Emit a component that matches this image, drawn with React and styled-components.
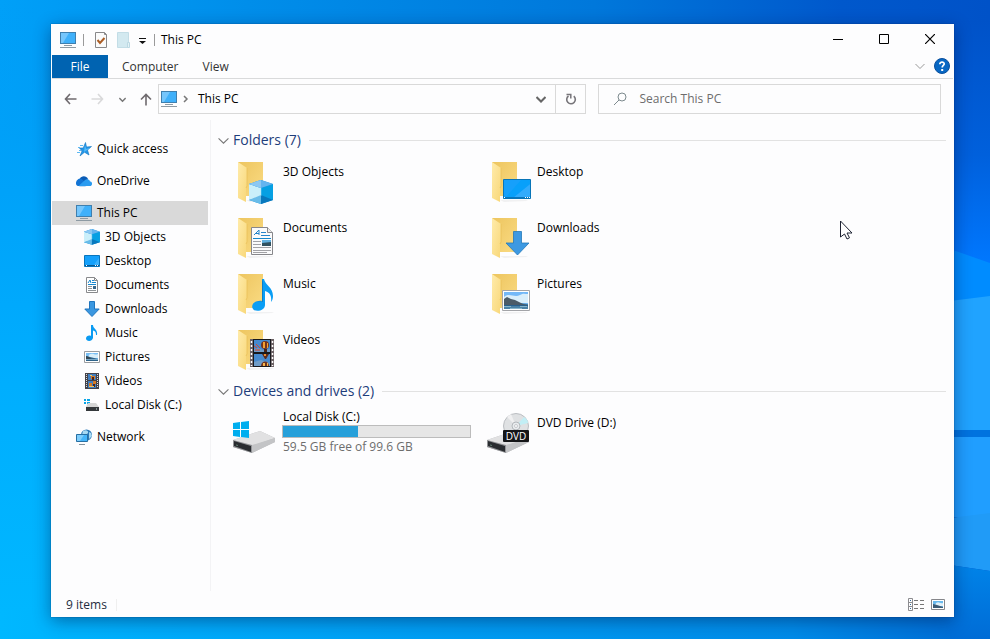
import React from "react";
import styled, { createGlobalStyle, css } from "styled-components";

const GlobalStyle = createGlobalStyle`
  * { box-sizing: border-box; }
  html, body { margin: 0; padding: 0; }
  body {
    font-family: "Open Sans", "Noto Sans", sans-serif;
    font-size: 12px;
    line-height: 16px;
    color: #000;
    background: #0078d7;
  }
  button, input { font: inherit; color: inherit; }
  svg { display: block; flex: none; }
`;

/* ---------- layout ---------- */

const Desktop = styled.main`
  position: relative;
  display: flex;
  min-height: 100vh;
  padding: 24px 36px 22px 51px;
  overflow: hidden;
`;

const WallpaperLayer = styled.div`
  position: absolute;
  inset: 0;
  svg { width: 100%; height: 100%; }
`;

const Window = styled.section`
  position: relative;
  display: flex;
  flex: 1;
  flex-direction: column;
  min-width: 0;
  padding: 0 1px;
  background: #fdfdfe;
  box-shadow: 0 4px 16px rgba(0, 20, 70, 0.45), 0 0 1px rgba(0, 40, 90, 0.7);
`;

const TitleBar = styled.header`
  display: flex;
  align-items: center;
  height: 31px;
  padding-left: 8px;
`;

const PlainButton = styled.button`
  display: flex;
  align-items: center;
  justify-content: center;
  padding: 0;
  border: 0;
  background: transparent;
`;

const QuickTools = styled.div`
  display: flex;
  align-items: center;
  gap: 6px;
`;

const Divider = styled.span`
  width: 1px;
  height: 12px;
  margin: 0 3px 0 1px;
  background: ${(p) => (p.$faint ? "#efefef" : "#9a9a9a")};
`;

const ToolButton = styled(PlainButton)`
  width: ${(p) => (p.$narrow ? "10px" : "16px")};
  height: 20px;
`;

const WindowTitle = styled.h1`
  flex: 1;
  margin: 0 0 0 3px;
  font-size: 12px;
  font-weight: 400;
`;

const CaptionButton = styled(PlainButton)`
  align-self: flex-start;
  width: 46px;
  height: 30px;
`;

const Ribbon = styled.nav`
  display: flex;
  align-items: stretch;
  height: 24px;
  border-bottom: 1px solid #d9dadb;
`;

const RibbonTab = styled.button`
  padding: 0 10px 0 14px;
  border: 0;
  background: transparent;
  color: #333;
  ${(p) =>
    p.$primary &&
    css`
      width: 56px;
      padding: 0;
      background: #0063b1;
      color: #fff;
    `}
`;

const RibbonTools = styled.div`
  display: flex;
  align-items: center;
  height: 22px;
  gap: 9px;
  margin-left: auto;
  padding-right: 3px;
`;

const AddressRow = styled.div`
  display: flex;
  gap: 12px;
  padding: 5px 12px 6px;
`;

const NavButtons = styled.div`
  display: flex;
  align-items: center;
  justify-content: space-between;
  width: 88px;
`;

const NavGroup = styled.div`
  display: flex;
  flex: 8;
  gap: 6px;
`;

const AddressBox = styled.div`
  display: flex;
  flex: 1;
  align-items: center;
  height: 30px;
  padding-left: 2px;
  border: 1px solid #d9d9d9;
`;

const Crumb = styled(PlainButton)`
  flex: 1;
  justify-content: flex-start;
  gap: 6px;
`;

const CrumbLabel = styled.span`
  padding-left: 3px;
`;

const AddressAction = styled(PlainButton)`
  width: 30px;
  height: 28px;
  border-left: 1px solid ${(p) => (p.$bordered ? "#d9d9d9" : "transparent")};
`;

const SearchBox = styled.label`
  display: flex;
  flex: 5;
  align-items: center;
  gap: 12px;
  height: 30px;
  padding-left: 14px;
  border: 1px solid #d9d9d9;
`;

const SearchInput = styled.input`
  flex: 1;
  min-width: 0;
  padding: 0;
  border: 0;
  outline: 0;
  background: transparent;
  &::placeholder { color: #6d6d6d; opacity: 1; }
`;

const Body = styled.div`
  display: flex;
  flex: 1;
`;

const Sidebar = styled.nav`
  display: flex;
  flex-direction: column;
  gap: 8px;
  width: 159px;
  padding: 17px 2px 0 0;
  border-right: 1px solid #f3f3f5;
`;

const TreeGroup = styled.div`
  display: flex;
  flex-direction: column;
`;

const TreeItem = styled.a`
  display: flex;
  align-items: center;
  gap: 5px;
  height: 24px;
  padding-left: ${(p) => (p.$nested ? "32px" : "24px")};
  background: ${(p) => (p.$selected ? "#d9d9d9" : "transparent")};
  color: #000;
  text-decoration: none;
`;

const Content = styled.div`
  flex: 1;
  min-width: 0;
  padding: 8px 7px 0 7px;
`;

const GroupSection = styled.section`
  margin-bottom: 1px;
`;

const GroupTitle = styled.h2`
  display: flex;
  align-items: center;
  gap: 4px;
  height: 24px;
  margin: 0;
  color: #1e3d7b;
  font-size: 14px;
  font-weight: 400;
  line-height: 24px;
  &::after {
    content: "";
    flex: 1;
    height: 1px;
    margin-left: 4px;
    background: #e2e2e2;
  }
`;

const TileGrid = styled.div`
  display: grid;
  grid-template-columns: repeat(auto-fill, 254px);
  grid-auto-rows: 56px;
  max-width: 600px;
  padding: 2px 0 0 10px;
`;

const Tile = styled.a`
  display: flex;
  gap: 2px;
  padding: 4px;
  color: #000;
  text-decoration: none;
`;

const TileText = styled.div`
  display: flex;
  flex-direction: column;
  width: 189px;
  padding-top: ${(p) => (p.$detailed ? "0" : "6px")};
`;

const TileName = styled.span`
  padding-left: 1px;
`;

const TileNote = styled(TileName)`
  color: #6d6d6d;
`;

const Meter = styled.div`
  height: 13px;
  margin-bottom: 1px;
  border: 1px solid #bcbcbc;
  background: #e6e6e6;
`;

const MeterFill = styled.div`
  height: 100%;
  background: #26a0da;
`;

const StatusBar = styled.footer`
  display: flex;
  align-items: center;
  gap: 8px;
  height: 26px;
  padding: 1px 8px 0 14px;
  color: #1f2d40;
`;

const ViewButtons = styled.div`
  display: flex;
  gap: 7px;
  margin-left: auto;
`;

const Pointer = styled.div`
  position: absolute;
  left: 840px;
  top: 220px;
  pointer-events: none;
`;

/* ---------- small icons (16px) ---------- */

const Svg = ({ w = 16, h = w, children }) => (
  <svg width={w} height={h} viewBox={`0 0 ${w} ${h}`} fill="none" aria-hidden="true">
    {children}
  </svg>
);

const MonitorIcon = () => (
  <Svg>
    <path d="M0 0h16v12H0z" fill="#3f7fae" />
    <path d="M1 1h14v10H1z" fill="#3fb0fa" />
    <path d="M1 1h8L3 11H1z" fill="#75c6fc" />
    <path d="M4 13.500h8M0 15.500h16" stroke="#8d9aa3" />
  </Svg>
);

const StarIcon = () => (
  <Svg>
    <path d="M9.500 1.500l1 4.500 5-.5-4 3.500 1.500 5-4.500-2.800L4 15l2-5-2.500-3h3.700z" fill="#2497e8" stroke="#1273bf" strokeWidth=".6" />
    <path d="M4 4.500h3M2 6.500h2M3 9.500h2M1 11.500h3" stroke="#5cb8f2" />
    <path d="M9 4l1 4 4-1-6 4z" fill="#55bbfa" />
  </Svg>
);

const CloudIcon = () => (
  <Svg>
    <path d="M4 5.500C5 2.500 10.500 2 12 6l-3 5H3z" fill="#0a5bb5" />
    <path d="M0 10.500C0 7.500 2 5.500 5 5.500L13 12c-2 2-10 1-11 1-1 0-2-1-2-2.500z" fill="#1273d4" />
    <path d="M8 8c2-3 6-2 6 .500 3 0 2.500 4.500 0 4.500H2.500z" fill="#2a9bf0" />
  </Svg>
);

const CubeShape = () => (
  <g>
    <path d="M0 4l12-4 12 4v16l-12 4-12-4z" fill="#0f8fd8" />
    <path d="M0 4l12 4v9L0 20z" fill="#caeffa" />
    <path d="M12 8l12-4v16l-12-4z" fill="#06a0e3" />
    <path d="M0 4l12-4 12 4-12 4z" fill="#64b4ef" />
    <path d="M0 4l12-4v8z" fill="#8dc8f2" />
    <path d="M0 20l12-5v9z" fill="#69bce9" />
    <path d="M12 15l12 5-12 4z" fill="#0878bd" />
    <path d="M12 8v8" stroke="#a5e1f9" strokeWidth=".5" />
  </g>
);

const CubeIcon = () => (
  <Svg>
    <g transform="scale(.66)">
      <CubeShape />
    </g>
  </Svg>
);

const ScreenIcon = () => (
  <Svg>
    <path d="M.5 2.500h15v11H.5z" fill="#14a0fb" stroke="#0875bd" />
    <path d="M9 13L15 5v8z" fill="#3bb1fc" />
    <path d="M1 12.500h14" stroke="#065790" />
    <path d="M2 12.500h1M11 12.500h1M13 12.500h1" stroke="#fff" />
  </Svg>
);

const PageIcon = () => (
  <Svg>
    <path d="M2.500.5h8l3 3v12h-11z" fill="#fff" stroke="#88898c" />
    <path d="M10.500.5v3h3" stroke="#88898c" />
    <path d="M4 6l2-3 1 3M8 3.500h2M8 5.500h4M4 7.500h8" stroke="#1787cf" />
    <path d="M4 9.500h4M4 11.500h4M4 13.500h8" stroke="#8f9498" />
    <path d="M9 9h3v3H9z" fill="#39688d" />
  </Svg>
);

const ArrowDownIcon = () => (
  <Svg>
    <path d="M5.500.5h5V8h4.700L8 15.500.8 8h4.700z" fill="#3b97e0" stroke="#1f75be" />
  </Svg>
);

const NoteIcon = () => (
  <Svg>
    <path d="M7 0h2c0 4 5 4 4 10h-1c0-3-1-4-3-4.500V13c-1 4-7 3.500-7 .5C2 11 5 10 7 11z" fill="#0a9bf2" />
  </Svg>
);

const PictureIcon = () => (
  <Svg>
    <path d="M.5 2.500h15v11H.5z" fill="#fff" stroke="#999da1" />
    <path d="M2 4h12v8H2z" fill="#78bff5" />
    <path d="M5 6c4-3 6 1 9-1v4H4z" fill="#d7eefa" />
    <path d="M2 7l4 1 8 2v2H2z" fill="#2d6289" />
    <path d="M2 7l3 1 2 2H2z" fill="#344855" />
    <path d="M2 10.500h12" stroke="#79a8c5" />
  </Svg>
);

const FilmIcon = () => (
  <Svg>
    <path d="M1 0h14v16H1z" fill="#44434a" />
    <path d="M4 1h8v6H4zM4 8h8v7H4z" fill="#417fc1" />
    <path d="M2.500 1v14M13.500 1v14" stroke="#ddd" strokeDasharray="1 1" />
    <path d="M7 3h4v3H7zM5 10h3v3H5zM9 8h3v3H9z" fill="#d77b25" />
    <path d="M8 4h2v3H8zM9 11h2v3H9z" fill="#48251b" />
    <path d="M6 2.500h2M5 13.500h5" stroke="#f3c563" />
  </Svg>
);

const DiskIcon = () => (
  <Svg>
    <path d="M0 2h2v2H0zM3 2h3v2H3zM0 5h2v2H0zM3 5h3v2H3z" fill="#08a5e7" />
    <path d="M2 10l2-4h8l3 4v1H2z" fill="#d5d5d5" />
    <path d="M2 10h13v4H2z" fill="#34383b" />
    <path d="M12 12h1" stroke="#cfe9e7" />
  </Svg>
);

const NetworkIcon = () => (
  <Svg>
    <circle cx="10.500" cy="6" r="5.500" fill="#2b78b8" />
    <path d="M7 2c3-2 6 0 5 2S8 5 6 6zM13 3l2 1 1 3-3 3z" fill="#a8d9f2" />
    <path d="M.5 5.500h11v7H.5z" fill="#45b5fa" stroke="#276fa3" />
    <path d="M1 6h7l-4 6H1z" fill="#7ecdfc" />
    <path d="M3 15.500h6" stroke="#83919c" />
  </Svg>
);

/* ---------- title, ribbon and navigation icons ---------- */

const PropertiesIcon = () => (
  <Svg>
    <path d="M2.500.5h9l2 2v13h-11z" fill="#fbfbfb" stroke="#88888a" />
    <path d="M11.500.5v2h2" stroke="#88888a" />
    <path d="M4.500 8l2.500 3 4.500-5" stroke="#ab5d25" strokeWidth="2" />
  </Svg>
);

const NewFolderIcon = () => (
  <Svg>
    <path d="M2.500.5h11v15h-11z" fill="#d3e9f0" stroke="#c3dde6" />
    <path d="M12.500 15.500V10.500h2v5z" fill="#e4f1f5" stroke="#bcd9e3" />
  </Svg>
);

const MenuCaretIcon = () => (
  <Svg w={10} h={8}>
    <path d="M2 2.500h7" stroke="#111" />
    <path d="M2 5h7L5.500 8z" fill="#111" />
  </Svg>
);

const MinimizeIcon = () => (
  <Svg w={10}>
    <path d="M0 5.500h10" stroke="#000" />
  </Svg>
);

const MaximizeIcon = () => (
  <Svg w={10}>
    <path d="M.5.5h9v9h-9z" stroke="#000" />
  </Svg>
);

const CloseIcon = () => (
  <Svg w={10}>
    <path d="M0 0l10 10M10 0L0 10" stroke="#000" strokeWidth="1.200" />
  </Svg>
);

const ChevronIcon = ({ w = 10, color = "#777", weight = 1 }) => (
  <svg width={w} height={w} viewBox="0 0 10 10" fill="none" aria-hidden="true">
    <path d="M.5 3L5 7.500 9.500 3" stroke={color} strokeWidth={weight} />
  </svg>
);

const ChevronRightIcon = () => (
  <Svg w={6} h={8}>
    <path d="M1 1l3 3-3 3" stroke="#777" strokeWidth="1.500" />
  </Svg>
);

const HelpIcon = () => (
  <Svg>
    <circle cx="8" cy="8" r="7.500" fill="#0868c4" stroke="#0a4f9d" />
    <path d="M5.800 6.200c0-3 4.600-2.700 4.400-.2-.1 1.500-2 1.400-2 3.500" stroke="#fff" strokeWidth="1.700" />
    <path d="M7.200 11h2v2h-2z" fill="#fff" />
  </Svg>
);

const BackIcon = () => (
  <Svg w={13} h={12}>
    <path d="M6 1L1.500 6 6 11M2 6h10.500" stroke="#6f6a6e" strokeWidth="1.600" />
  </Svg>
);

const ForwardIcon = () => (
  <Svg w={13} h={12}>
    <path d="M7 1l4.500 5L7 11M.5 6H11" stroke="#d9d9da" strokeWidth="1.600" />
  </Svg>
);

const UpIcon = () => (
  <Svg w={12} h={13}>
    <path d="M1 6.500l5-5 5 5M6 2v10.500" stroke="#6f6a6e" strokeWidth="1.600" />
  </Svg>
);

const RefreshIcon = () => (
  <Svg w={12}>
    <path d="M3.500 3A4.300 4.300 0 1 0 8.800 3.200" stroke="#77757a" strokeWidth="1.600" />
    <path d="M1.500 1.500h4.300v4" stroke="#77757a" strokeWidth="1.500" />
  </Svg>
);

const SearchIcon = () => (
  <Svg w={14}>
    <circle cx="9" cy="5" r="4" stroke="#7d8a8e" />
    <path d="M6 8l-5 5" stroke="#7d8a8e" />
  </Svg>
);

const DetailsViewIcon = () => (
  <Svg w={16} h={13}>
    <path d="M.5.5h4v12h-4zM.5 4.500h4M.5 8.500h4" stroke="#8c8c90" />
    <path d="M2 2.500h1M2 6.500h1M2 10.500h1" stroke="#326b99" />
    <path d="M6 2.500h4M12 2.500h4M6 6.500h4M12 6.500h4M6 10.500h4M12 10.500h4" stroke="#777" />
  </Svg>
);

const ThumbnailViewIcon = () => (
  <Svg w={14} h={13}>
    <path d="M.5 1.500h13v10H.5z" fill="#fff" stroke="#85868a" />
    <path d="M2 3h10v7H2z" fill="#69b9ed" />
    <path d="M5 5c3-2 4 1 7 0v3H4z" fill="#e0f0f9" />
    <path d="M2 6l4 1 6 2v1H2z" fill="#3d5b75" />
  </Svg>
);

/* ---------- large tile icons (48px) ---------- */

const FolderBase = ({ children }) => (
  <svg width="48" height="48" viewBox="0 0 48 48" fill="none" aria-hidden="true">
    <defs>
      <linearGradient id="folderBack" x1="0" y1="0" x2="1" y2="1">
        <stop stopColor="#edc55f" />
        <stop offset="1" stopColor="#fadb83" />
      </linearGradient>
      <linearGradient id="folderFlap" x1="0" y1="0" x2="1" y2="1">
        <stop stopColor="#ffebaa" />
        <stop offset="1" stopColor="#f8d778" />
      </linearGradient>
    </defs>
    <path d="M14 42h26l2 1-24 1z" fill="#f1f1f2" />
    <path d="M6 4h25v34H14z" fill="url(#folderBack)" />
    <path d="M6 4l9 6v18l-1 2v14l-8-4z" fill="url(#folderFlap)" />
    <path d="M15 10v18l-1 2" stroke="#e8bd55" strokeWidth=".7" />
    {children}
  </svg>
);

const CubeFolder = () => (
  <FolderBase>
    <g transform="translate(17 22)">
      <CubeShape />
    </g>
  </FolderBase>
);

const DesktopFolder = () => (
  <FolderBase>
    <path d="M17.500 21.500h27v19h-27z" fill="#16a0fb" stroke="#0875b8" />
    <path d="M28 39l16-13v13z" fill="#32abfc" />
    <path d="M35 22h9v4L28 39h-8z" fill="#08a0fa" />
    <path d="M18 39.500h26" stroke="#0876bd" />
    <path d="M18 39.500h1M39 39.500h1M41 39.500h1M43 39.500h1" stroke="#fff" />
  </FolderBase>
);

const DocumentsFolder = () => (
  <FolderBase>
    <path d="M19.500 13.500h16l5 5v22h-21z" fill="#fbfbfc" stroke="#87878b" />
    <path d="M35.500 13.500v5h5" fill="#eee" stroke="#87878b" />
    <path d="M22 21l5-5v5M24 19.500h3M29 18.500h5M29 21.500h9" stroke="#2786cb" />
    <path d="M21 24.500h18" stroke="#1687cb" />
    <path d="M21 27.500h8M21 30.500h8M21 33.500h18M21 36.500h18M21 38.500h14" stroke="#a2a2a6" />
    <path d="M30 26h9v6h-9z" fill="#62b0df" />
    <path d="M30 29l9-1v4h-9z" fill="#30515f" />
  </FolderBase>
);

const DownloadsFolder = () => (
  <FolderBase>
    <path d="M27.500 17.500h8V29h7.500L31.500 41 20 29h7.500z" fill="#3d99e2" stroke="#2478b9" strokeWidth=".8" />
  </FolderBase>
);

const MusicFolder = () => (
  <FolderBase>
    <path d="M30 9h2c1 6 9 8 9 17 0 3-1 5-2 6 1-7-2-10-6-11v14c0 5-7 7-11 5-4-3-1-9 5-9 1 0 2 0 3 .500z" fill="#0a9ef5" />
    <path d="M30 9v22c-3-1-8 1-9 4 1-3 6-5 10-3V12z" fill="#087fcb" />
  </FolderBase>
);

const PicturesFolder = () => (
  <FolderBase>
    <path d="M16.500 20.500h27v20h-27z" fill="#fff" stroke="#a3a4a8" />
    <path d="M18 22h24v17H18z" fill="#73b8f8" />
    <path d="M18 27c5-5 10 1 16-2 3-2 5-1 8-1v9H18z" fill="#d9eefb" />
    <path d="M18 31l7 0 6 2 11 1v5H18z" fill="#4a81a6" />
    <path d="M18 29l3-2 4 2 4 1 8 4 5 1H18z" fill="#4b5b68" />
    <path d="M18 35h24v1H18z" fill="#285f8c" />
    <path d="M18 36.500h7M24 38.500h12M34 36.500h7" stroke="#87b4ca" />
  </FolderBase>
);

const VideosFolder = () => (
  <FolderBase>
    <path d="M18 13h24v28H18z" fill="#6c6265" />
    <path d="M21 13h18v28H21z" fill="#17181d" />
    <path d="M22 14h16v12H22zM22 28h16v12H22z" fill="#4689ce" />
    <path d="M19.500 15v25M40.500 15v25" stroke="#fff" strokeWidth="1.500" strokeDasharray="2 2" />
    <path d="M22 23l4-1 5 2 7-1v3H22zM22 36l7-2 9 3v3H22z" fill="#6f9cc8" />
    <circle cx="33" cy="19" r="4" fill="#75351e" />
    <path d="M31 16h2v6h-2zM35 17h1v5h-1z" fill="#f3a133" />
    <path d="M32 23h3v3h-3z" fill="#48251b" />
    <path d="M30 28h7l-3 5h-1z" fill="#5b2b1c" />
    <path d="M32 28h2v2h-2z" fill="#e58b2d" />
    <path d="M29 40c0-6 8-6 8 0z" fill="#70341f" />
    <path d="M31 37h2v3h-2zM35 37h1v3h-1z" fill="#f6b54a" />
    <path d="M22 20l3 2M24 18l4 4M23 24h5" stroke="#d9472b" />
  </FolderBase>
);

const DriveBody = () => (
  <g>
    <path d="M1 31L28 22l15 7v4L20 44 1 38z" fill="#b9babd" />
    <path d="M1 31L28 22l15 7-23 8z" fill="#e1e1e2" />
    <path d="M1 31l19 5v8L1 38z" fill="#929396" />
    <path d="M2 32l17 5v6L2 37z" fill="#292c30" />
    <path d="M4 36l2 .5" stroke="#607d70" />
    <path d="M20 36l23-7v4L20 44z" fill="#c3c4c6" />
  </g>
);

const WindowsDrive = () => (
  <Svg w={48}>
    <DriveBody />
    <path d="M1 14l7-1v7H1zM9 13l8-1v8H9zM1 21h7v7l-7-1zM9 21h8v8l-8-1z" fill="#00aeef" />
  </Svg>
);

const DvdDrive = () => (
  <Svg w={48}>
    <DriveBody />
    <circle cx="30" cy="17" r="12.500" fill="#dfe1e3" stroke="#bbbec2" />
    <path d="M30 17l8-9c3 2 4 4 4 6z" fill="#c2eef5" />
    <path d="M30 17L21 8l4-3z" fill="#f0f0f1" />
    <circle cx="30" cy="17" r="4" fill="#e9ecee" stroke="#b4b8bc" />
    <circle cx="30" cy="17" r="1.500" fill="#fff" stroke="#c5c8cc" />
    <rect x="17" y="21" width="26" height="12" rx="1" fill="#151618" />
    <text x="30" y="31" textAnchor="middle" fill="#fff" fontFamily="Open Sans, sans-serif" fontSize="10">DVD</text>
  </Svg>
);

/* ---------- wallpaper and pointer ---------- */

const Wallpaper = () => (
  <WallpaperLayer>
    <svg viewBox="0 0 990 639" preserveAspectRatio="none" aria-hidden="true">
      <defs>
        <linearGradient id="sky" x1="0" y1="0" x2="1" y2="0">
          <stop stopColor="#00a0f8" />
          <stop offset=".25" stopColor="#008eea" />
          <stop offset=".6" stopColor="#0078db" />
          <stop offset=".85" stopColor="#0058cc" />
          <stop offset="1" stopColor="#0052c8" />
        </linearGradient>
        <linearGradient id="leftGlow" x1="0" y1="0" x2="0" y2="1">
          <stop stopColor="#009cf5" stopOpacity="0" />
          <stop offset=".3" stopColor="#00a2f9" />
          <stop offset=".6" stopColor="#00aefe" />
          <stop offset="1" stopColor="#00b8ff" />
        </linearGradient>
        <linearGradient id="floor" x1="0" y1="0" x2="1" y2="0">
          <stop stopColor="#00b8ff" />
          <stop offset=".2" stopColor="#00aafa" />
          <stop offset=".8" stopColor="#008be8" />
          <stop offset="1" stopColor="#0068d2" />
        </linearGradient>
        <linearGradient id="rightGlow" x1="0" y1="0" x2="0" y2="1">
          <stop stopColor="#0052c8" />
          <stop offset=".55" stopColor="#0060dc" />
          <stop offset="1" stopColor="#0078ff" />
        </linearGradient>
        <linearGradient id="lowerRight" x1="0" y1="0" x2="0" y2="1">
          <stop stopColor="#0083e8" />
          <stop offset="1" stopColor="#006cd6" />
        </linearGradient>
      </defs>
      <path d="M0 0h990v639H0z" fill="url(#sky)" />
      <path d="M0 0h60v639H0z" fill="url(#leftGlow)" />
      <path d="M0 610h990v29H0z" fill="url(#floor)" />
      <path d="M950 20h40v245h-40z" fill="url(#rightGlow)" />
      <path d="M950 249l40 14v40h-40z" fill="#008cff" />
      <path d="M950 301l40-5v135h-40z" fill="#20a3ff" />
      <path d="M950 430h40v7h-40z" fill="#0073df" />
      <path d="M950 437h40v80h-40z" fill="#209eff" />
      <path d="M950 518l40-5v58l-40-6z" fill="#209bf7" />
      <path d="M950 565l40 6v68h-40z" fill="url(#lowerRight)" />
    </svg>
  </WallpaperLayer>
);

const PointerIcon = () => (
  <Svg w={14} h={21}>
    <path d="M.5 1v16l4-3 2.500 5 2.500-1.200L7 13h5z" fill="#fff" stroke="#1d2232" />
  </Svg>
);

/* ---------- data ---------- */

const tree = [
  [{ name: "Quick access", Icon: StarIcon }],
  [{ name: "OneDrive", Icon: CloudIcon }],
  [
    { name: "This PC", Icon: MonitorIcon, selected: true },
    { name: "3D Objects", Icon: CubeIcon, nested: true },
    { name: "Desktop", Icon: ScreenIcon, nested: true },
    { name: "Documents", Icon: PageIcon, nested: true },
    { name: "Downloads", Icon: ArrowDownIcon, nested: true },
    { name: "Music", Icon: NoteIcon, nested: true },
    { name: "Pictures", Icon: PictureIcon, nested: true },
    { name: "Videos", Icon: FilmIcon, nested: true },
    { name: "Local Disk (C:)", Icon: DiskIcon, nested: true },
  ],
  [{ name: "Network", Icon: NetworkIcon }],
];

const folders = [
  { name: "3D Objects", Icon: CubeFolder },
  { name: "Desktop", Icon: DesktopFolder },
  { name: "Documents", Icon: DocumentsFolder },
  { name: "Downloads", Icon: DownloadsFolder },
  { name: "Music", Icon: MusicFolder },
  { name: "Pictures", Icon: PicturesFolder },
  { name: "Videos", Icon: VideosFolder },
];

const drives = [
  { name: "Local Disk (C:)", Icon: WindowsDrive, used: 40, note: "59.5 GB free of 99.6 GB" },
  { name: "DVD Drive (D:)", Icon: DvdDrive },
];

const Group = ({ title, items }) => (
  <GroupSection>
    <GroupTitle>
      <ChevronIcon w={11} />
      {title}
    </GroupTitle>
    <TileGrid>
      {items.map(({ name, Icon, used, note }) => (
        <Tile key={name} href="#">
          <Icon />
          <TileText $detailed={Boolean(note)}>
            <TileName>{name}</TileName>
            {note && (
              <>
                <Meter role="meter" aria-label="Used space" aria-valuemin={0} aria-valuemax={100} aria-valuenow={used}>
                  <MeterFill style={{ width: `${used}%` }} />
                </Meter>
                <TileNote>{note}</TileNote>
              </>
            )}
          </TileText>
        </Tile>
      ))}
    </TileGrid>
  </GroupSection>
);

export default function App() {
  return (
    <Desktop>
      <GlobalStyle />
      <Wallpaper />
      <Window>
        <TitleBar>
          <QuickTools>
            <MonitorIcon />
            <Divider />
            <ToolButton aria-label="Properties"><PropertiesIcon /></ToolButton>
            <ToolButton aria-label="New folder"><NewFolderIcon /></ToolButton>
            <ToolButton $narrow aria-label="Customize toolbar"><MenuCaretIcon /></ToolButton>
            <Divider />
          </QuickTools>
          <WindowTitle>This PC</WindowTitle>
          <CaptionButton aria-label="Minimize"><MinimizeIcon /></CaptionButton>
          <CaptionButton aria-label="Maximize"><MaximizeIcon /></CaptionButton>
          <CaptionButton aria-label="Close"><CloseIcon /></CaptionButton>
        </TitleBar>
        <Ribbon aria-label="Ribbon">
          <RibbonTab $primary>File</RibbonTab>
          <RibbonTab>Computer</RibbonTab>
          <RibbonTab>View</RibbonTab>
          <RibbonTools>
            <PlainButton aria-label="Expand ribbon"><ChevronIcon color="#999" /></PlainButton>
            <PlainButton aria-label="Help"><HelpIcon /></PlainButton>
          </RibbonTools>
        </Ribbon>
        <AddressRow>
          <NavGroup>
            <NavButtons>
              <PlainButton aria-label="Back"><BackIcon /></PlainButton>
              <PlainButton aria-label="Forward"><ForwardIcon /></PlainButton>
              <PlainButton aria-label="Recent locations"><ChevronIcon w={7} weight={2} /></PlainButton>
              <PlainButton aria-label="Up"><UpIcon /></PlainButton>
            </NavButtons>
            <AddressBox>
              <Crumb>
                <MonitorIcon />
                <ChevronRightIcon />
                <CrumbLabel>This PC</CrumbLabel>
              </Crumb>
              <AddressAction aria-label="Previous locations"><ChevronIcon color="#666" weight={2} /></AddressAction>
              <AddressAction $bordered aria-label="Refresh"><RefreshIcon /></AddressAction>
            </AddressBox>
          </NavGroup>
          <SearchBox>
            <SearchIcon />
            <SearchInput type="text" aria-label="Search This PC" placeholder="Search This PC" />
          </SearchBox>
        </AddressRow>
        <Body>
          <Sidebar aria-label="Locations">
            {tree.map((group) => (
              <TreeGroup key={group[0].name}>
                {group.map(({ name, Icon, nested, selected }) => (
                  <TreeItem key={name} href="#" $nested={nested} $selected={selected}>
                    <Icon />
                    {name}
                  </TreeItem>
                ))}
              </TreeGroup>
            ))}
          </Sidebar>
          <Content>
            <Group title="Folders (7)" items={folders} />
            <Group title="Devices and drives (2)" items={drives} />
          </Content>
        </Body>
        <StatusBar>
          9 items
          <Divider $faint />
          <ViewButtons>
            <PlainButton aria-label="Details view"><DetailsViewIcon /></PlainButton>
            <PlainButton aria-label="Large icons view"><ThumbnailViewIcon /></PlainButton>
          </ViewButtons>
        </StatusBar>
      </Window>
      <Pointer><PointerIcon /></Pointer>
    </Desktop>
  );
}
